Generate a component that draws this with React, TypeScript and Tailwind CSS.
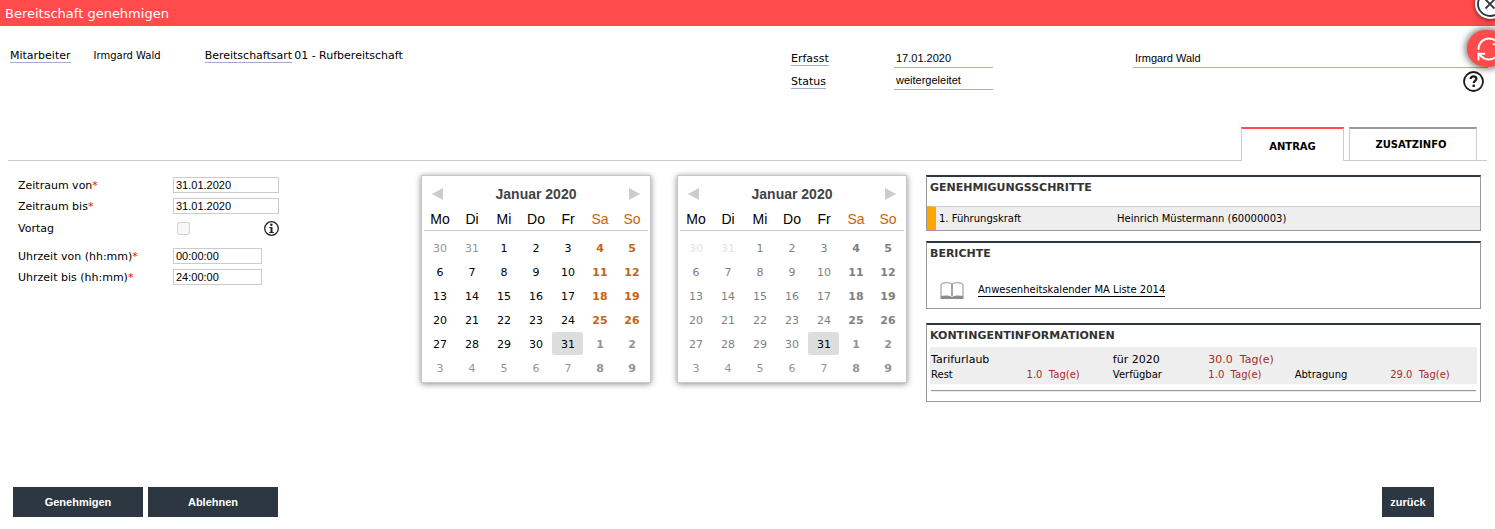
import { RefreshCw } from 'lucide-react';
import type { ReactNode } from 'react';

const WEEKDAYS = ['Mo', 'Di', 'Mi', 'Do', 'Fr', 'Sa', 'So'];

// six weeks starting on Monday, 30 December 2019
const DAYS = Array.from({ length: 42 }, (_, i) => new Date(2019, 11, 30 + i));
const WEEKS = Array.from({ length: 6 }, (_, w) => DAYS.slice(w * 7, w * 7 + 7));

function dayColor(date: Date, col: number, readOnly: boolean) {
  const month = date.getMonth();
  if (month === 0 && date.getDate() === 31) return 'bg-[#dddddd] text-black';
  if (readOnly && month === 11) return 'text-[#e4e4e4]';
  if (month === 0 && readOnly) return 'text-[#808080]';
  if (month === 0) return col > 4 ? 'text-[#c9630c]' : 'text-black';
  return 'text-[#949494]';
}

function Calendar({ readOnly = false }: { readOnly?: boolean }) {
  return (
    <div className="w-[230px] shrink-0 border border-[#c8c8c8] bg-white px-[2px] pt-[6px] pb-[2px] shadow-[0_1px_6px_rgba(0,0,0,0.45)]">
      <div className="flex h-6 items-center justify-between px-2 font-['Liberation_Sans',Arial,sans-serif]">
        <button type="button" aria-label="Vorheriger Monat">
          <svg width="11" height="12" viewBox="0 0 11 12" fill="#cccccc">
            <path d="M11 0v12L0 6z" />
          </svg>
        </button>
        <span className="text-[14px] font-bold text-[#444444]">Januar 2020</span>
        <button type="button" aria-label="Nächster Monat">
          <svg width="11" height="12" viewBox="0 0 11 12" fill="#cccccc">
            <path d="M0 0v12l11-6z" />
          </svg>
        </button>
      </div>
      <table className="w-full table-fixed border-collapse text-center">
        <thead>
          <tr className="h-6 border-b border-[#cccccc] font-['Liberation_Sans',Arial,sans-serif] text-[14px] leading-5">
            {WEEKDAYS.map((name, col) => (
              <th key={name} className={`p-0 pt-[2px] font-normal ${col > 4 ? 'text-[#c9630c]' : 'text-black'}`}>
                {name}
              </th>
            ))}
          </tr>
          <tr className="h-[6px]" />
        </thead>
        <tbody className="text-[11px] leading-[21px]">
          {WEEKS.map((week, w) => (
            <tr key={w} className="h-6">
              {week.map((date, col) => (
                <td key={col} className="p-0 pr-px pb-px">
                  <span
                    className={`block rounded-xs pt-[2px] pl-px ${col > 4 ? 'font-bold' : ''} ${dayColor(date, col, readOnly)}`}
                  >
                    {date.getDate()}
                  </span>
                </td>
              ))}
            </tr>
          ))}
        </tbody>
      </table>
    </div>
  );
}

function Panel({ title, children }: { title: string; children: ReactNode }) {
  return (
    <section className="border border-t-2 border-[#999999] border-t-[#2d3741]">
      <h2 className="px-[3px] pt-1 text-[11px] leading-[14px] font-bold text-[#333333]">{title}</h2>
      {children}
    </section>
  );
}

interface FieldProps {
  id: string;
  label: string;
  value: string;
  width: string;
}

function Field({ id, label, value, width }: FieldProps) {
  return (
    <div className="flex h-4 items-center">
      <label htmlFor={id} className="w-[155px] pt-[2px]">
        {label}
        <span className="text-[#ff0000]">*</span>
      </label>
      <input
        id={id}
        defaultValue={value}
        className={`h-4 border border-[#cccccc] px-[2px] font-['Liberation_Sans',Arial,sans-serif] text-[11px] ${width}`}
      />
    </div>
  );
}

const LINE_INPUT =
  "h-[17px] border-b border-[#a3acd0] px-[2px] pb-[2px] font-['Liberation_Sans',Arial,sans-serif] text-[11px]";
const LINE_LABEL = 'border-b border-[#a3acd0] leading-[12px]';
const ACTION =
  "h-[30px] bg-[#2d3741] font-['Liberation_Sans',Arial,sans-serif] text-[11px] font-bold text-white";

export default function App() {
  return (
    <div className="relative overflow-hidden bg-white pb-3 font-['DejaVu_Sans',Verdana,sans-serif] text-[11px] text-black">
      <header className="flex h-[26px] items-center bg-[#ff4b4b] px-[5px]">
        <h1 className="pt-px text-[13px] text-white">Bereitschaft genehmigen</h1>
      </header>

      <button
        type="button"
        aria-label="Schließen"
        className="absolute -top-[11px] -right-[10px] size-[30px] rounded-full bg-white shadow-[0_1px_4px_rgba(0,0,0,0.6)]"
      >
        <svg viewBox="0 0 30 30" fill="none" stroke="#2d3741" strokeWidth="1.8">
          <circle cx="15" cy="15" r="12" />
          <path d="M10.5 10.5l9 9M19.5 10.5l-9 9" />
        </svg>
      </button>
      <button
        type="button"
        aria-label="Aktualisieren"
        className="absolute top-[30px] -right-[12px] flex h-[37px] w-10 items-center justify-center rounded-full bg-[#ff4b4b] pl-[3px] text-white shadow-[0_0_6px_2px_rgba(0,0,0,0.5)]"
      >
        <RefreshCw size={28} strokeWidth={1.7} />
      </button>
      <button type="button" aria-label="Hilfe" className="absolute top-[71px] right-[11px] size-[21px]">
        <svg viewBox="0 0 21 21" fill="none" stroke="#1a1a1a">
          <circle cx="10.5" cy="10.5" r="9.5" strokeWidth="1.8" />
          <path d="M7.6 8c0-1.7 1.2-2.7 2.9-2.7s2.9 1 2.9 2.500c0 2.100-2.700 2-2.700 4.300" strokeWidth="2.2" />
          <path d="M9.5 14.8h2.4" strokeWidth="2.4" />
        </svg>
      </button>

      <div className="flex pt-[22px] pr-[7px] pl-[10px]">
        <div className="flex w-[781px] shrink-0 items-start pt-[2px]">
          <span className={LINE_LABEL}>Mitarbeiter</span>
          <span className="ml-[23px] text-[10px] leading-[12px]">Irmgard Wald</span>
          <span className={`ml-11 ${LINE_LABEL}`}>Bereitschaftsart</span>
          <span className="ml-[2px] leading-[12px]">01 - Rufbereitschaft</span>
        </div>
        <div className="grid flex-1 grid-cols-[103px_99px_1fr] gap-y-[5px] pt-[3px]">
          <div className="flex items-start pt-[2px]">
            <label htmlFor="erfasst" className={LINE_LABEL}>Erfasst</label>
          </div>
          <input id="erfasst" readOnly defaultValue="17.01.2020" className={`w-full ${LINE_INPUT}`} />
          <input
            aria-label="Erfasst von"
            readOnly
            defaultValue="Irmgard Wald"
            className={`ml-[140px] ${LINE_INPUT}`}
          />
          <div className="flex items-start pt-[3px]">
            <label htmlFor="status" className={LINE_LABEL}>Status</label>
          </div>
          <input id="status" readOnly defaultValue="weitergeleitet" className={`w-full ${LINE_INPUT}`} />
        </div>
      </div>

      <nav className="mx-2 mt-[37px] flex justify-end gap-[5px] border-b border-[#cccccc] pr-[10px] text-[10px] font-bold">
        <button
          type="button"
          className="-mb-px h-[34px] w-[103px] border-x border-t-2 border-[#cccccc] border-t-[#ff4b4b] bg-white pt-[2px]"
        >
          ANTRAG
        </button>
        <button
          type="button"
          className="h-[33px] w-32 border-x border-t-2 border-[#cccccc] border-t-[#999999] bg-white pr-1"
        >
          ZUSATZINFO
        </button>
      </nav>

      <main className="flex items-start pt-[14px] pr-[14px]">
        <form className="flex w-[421px] shrink-0 flex-col gap-[5px] pt-[2px] pl-[18px]">
          <Field id="von" label="Zeitraum von" value="31.01.2020" width="w-[106px]" />
          <Field id="bis" label="Zeitraum bis" value="31.01.2020" width="w-[106px]" />
          <div className="mb-[6px] flex h-[18px] items-center">
            <label htmlFor="vortag" className="w-[155px] pt-[2px]">Vortag</label>
            <input id="vortag" type="checkbox" disabled className="ml-1 size-[13px]" />
            <button type="button" aria-label="Information" className="ml-[74px] size-[15px]">
              <svg viewBox="0 0 15 15">
                <circle cx="7.5" cy="7.5" r="6.8" fill="none" stroke="#222222" strokeWidth="1.3" />
                <circle cx="7.4" cy="3.8" r="1.2" fill="#222222" />
                <path d="M5.3 6h3.2v5h1.2v1.1H5.3V11h1.2V7.1H5.3z" fill="#222222" />
              </svg>
            </button>
          </div>
          <Field id="uhr-von" label="Uhrzeit von (hh:mm)" value="00:00:00" width="w-[89px]" />
          <Field id="uhr-bis" label="Uhrzeit bis (hh:mm)" value="24:00:00" width="w-[89px]" />
        </form>

        <div className="flex shrink-0 gap-[26px]">
          <Calendar />
          <Calendar readOnly />
        </div>

        <div className="ml-[19px] flex flex-1 flex-col">
          <Panel title="GENEHMIGUNGSSCHRITTE">
            <div className="mt-[11px] flex h-6 items-center border-t border-l-[9px] border-[#cccccc] border-l-[#ffa500] bg-[#eeeeee] pl-[3px] text-[10px]">
              <span className="w-[178px]">1. Führungskraft</span>
              <span>Heinrich Müstermann (60000003)</span>
            </div>
          </Panel>

          <div className="mt-[10px] mb-[14px]">
            <Panel title="BERICHTE">
              <div className="flex h-[47px] items-center pt-3 pl-3">
                <svg width="26" height="19" viewBox="0 0 26 19" fill="none">
                  <path
                    d="M2 15V3.5C5 1 10 1 13 3c3-2 8-2 11 .5V15"
                    stroke="#b5b5b5"
                    strokeWidth="1.5"
                  />
                  <path d="M13 3v12" stroke="#999999" strokeWidth="1.8" />
                  <path d="M1.5 15c4-.8 8-.8 11.500.8 3.500-1.600 7.500-1.600 11.500-.8v3h-23z" fill="#8c8c8c" />
                </svg>
                <a href="#bericht" className="ml-[13px] border-b border-black text-[10px] leading-[12px]">
                  Anwesenheitskalender MA Liste 2014
                </a>
              </div>
            </Panel>
          </div>

          <Panel title="KONTINGENTINFORMATIONEN">
            <div className="mt-1 px-[3px] pb-[9px]">
              <div className="bg-[#eeeeee] pt-[5px] pb-[2px] pl-px">
                <table className="w-full table-fixed border-collapse text-left text-[10px] leading-[14px] [&_td]:p-0 [&_td]:whitespace-pre">
                  <colgroup>
                    <col className="w-[17.5%]" />
                    <col className="w-[15.8%]" />
                    <col className="w-[17.5%]" />
                    <col className="w-[15.8%]" />
                    <col className="w-[17.5%]" />
                    <col />
                  </colgroup>
                  <tbody>
                    <tr className="text-[11px] leading-4">
                      <td colSpan={2}>Tarifurlaub</td>
                      <td>für 2020</td>
                      <td colSpan={3} className="text-[#a52a2a]">{'30.0  Tag(e)'}</td>
                    </tr>
                    <tr>
                      <td>Rest</td>
                      <td className="text-[#a52a2a]">{'1.0  Tag(e)'}</td>
                      <td>Verfügbar</td>
                      <td className="text-[#a52a2a]">{'1.0  Tag(e)'}</td>
                      <td>Abtragung</td>
                      <td className="text-[#a52a2a]">{'29.0  Tag(e)'}</td>
                    </tr>
                  </tbody>
                </table>
              </div>
              <hr className="mx-px mt-[6px] h-[2px] border-t border-b border-t-[#999999] border-b-[#eeeeee]" />
            </div>
          </Panel>
        </div>
      </main>

      <footer className="mt-[85px] flex items-center gap-[5px] pr-[61px] pl-[13px]">
        <button type="button" className={`w-[130px] ${ACTION}`}>Genehmigen</button>
        <button type="button" className={`w-[130px] ${ACTION}`}>Ablehnen</button>
        <button type="button" className={`ml-auto w-[52px] ${ACTION}`}>zurück</button>
      </footer>
    </div>
  );
}
